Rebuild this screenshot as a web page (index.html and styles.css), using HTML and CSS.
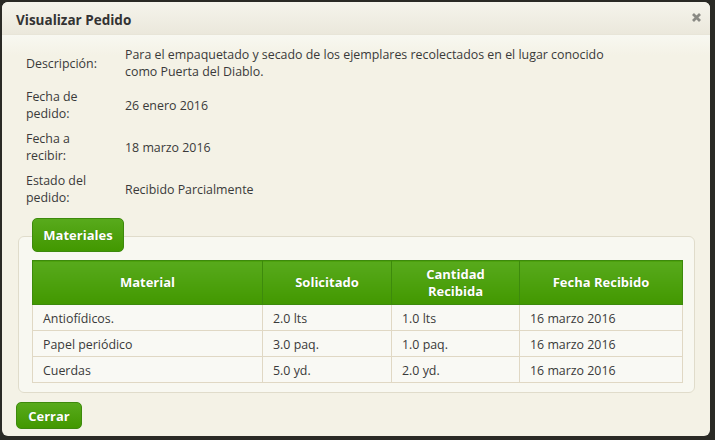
FILE: index.html
```html
<!DOCTYPE html>
<html lang="es">
<head>
<meta charset="utf-8">
<title>Visualizar Pedido</title>
<link rel="stylesheet" href="styles.css">
</head>
<body>
<div class="dialog">
  <div class="dialog-header">
    <span class="dialog-title">Visualizar Pedido</span>
    <svg class="close" width="11" height="11" viewBox="0 0 11 11" aria-label="Cerrar"><path d="M2 2 L9 9 M9 2 L2 9" stroke="#8a8a84" stroke-width="2.8" stroke-linecap="butt"/></svg>
  </div>
  <div class="dialog-body">
    <div class="info">
      <div class="info-row">
        <div class="info-label">Descripción:</div>
        <div class="info-value">Para el empaquetado y secado de los ejemplares recolectados en el lugar conocido como Puerta del Diablo.</div>
      </div>
      <div class="info-row">
        <div class="info-label">Fecha de pedido:</div>
        <div class="info-value">26 enero 2016</div>
      </div>
      <div class="info-row">
        <div class="info-label">Fecha a recibir:</div>
        <div class="info-value">18 marzo 2016</div>
      </div>
      <div class="info-row">
        <div class="info-label">Estado del pedido:</div>
        <div class="info-value">Recibido Parcialmente</div>
      </div>
    </div>
    <div class="group">
      <div class="group-legend">Materiales</div>
      <div class="group-box">
        <table class="materials">
          <thead>
            <tr>
              <th class="c1">Material</th>
              <th class="c2">Solicitado</th>
              <th class="c3">Cantidad<br>Recibida</th>
              <th class="c4">Fecha Recibido</th>
            </tr>
          </thead>
          <tbody>
            <tr><td>Antiofídicos.</td><td>2.0 lts</td><td>1.0 lts</td><td>16 marzo 2016</td></tr>
            <tr><td>Papel periódico</td><td>3.0 paq.</td><td>1.0 paq.</td><td>16 marzo 2016</td></tr>
            <tr><td>Cuerdas</td><td>5.0 yd.</td><td>2.0 yd.</td><td>16 marzo 2016</td></tr>
          </tbody>
        </table>
      </div>
    </div>
    <div class="actions">
      <button class="btn">Cerrar</button>
    </div>
  </div>
</div>
</body>
</html>
```

FILE: styles.css
```css
* { box-sizing: border-box; }
html, body { margin: 0; padding: 0; }
body {
  background: #2a2a25;
  font-family: "Open Sans", "Noto Sans", sans-serif;
  font-size: 12.4px;
  color: #3a3a3a;
  width: 715px;
  height: 440px;
  overflow: hidden;
}
.dialog {
  margin: 2px 0 0 2px;
  width: 708px;
  height: 434px;
  border-radius: 6px;
  background: #f4f2e6;
  overflow: hidden;
}
.dialog-header {
  height: 33px;
  display: flex;
  align-items: center;
  justify-content: space-between;
  padding: 4px 8px 0 14px;
  background: linear-gradient(#f5f4ec, #ebe8dc);
  border-bottom: 1px solid #e8e5d8;
}
.dialog-title {
  font-weight: bold;
  font-size: 13.5px;
  color: #333;
}
.close { display: block; margin-top: -5px; }
.dialog-body {
  background: linear-gradient(#f8f8f1 0, #f4f2e6 20px);
  padding-top: 11px;
}
.info {
  display: flex;
  flex-direction: column;
  gap: 8px;
  padding-left: 24px;
}
.info-row {
  display: flex;
  align-items: center;
  height: 34px;
  line-height: 17px;
}
.info-label {
  width: 99px;
  padding-right: 20px;
}
.info-value {
  width: 495px;
}
.group {
  margin: 12px 0 0 16px;
  width: 677px;
}
.group-legend {
  position: relative;
  z-index: 1;
  margin-left: 14px;
  width: 92px;
  height: 34px;
  display: flex;
  align-items: center;
  justify-content: center;
  color: #fff;
  font-weight: bold;
  font-size: 13px;
  border: 1px solid #3d8a0c;
  border-radius: 5px;
  background: linear-gradient(#58aa1c, #429800);
  text-shadow: 0 0 1px rgba(0,0,0,0.25);
}
.group-box {
  margin-top: -16px;
  border: 1px solid #e0dccb;
  border-radius: 6px;
  background: #f8f8f1;
  padding: 23px 12px 9px 13px;
}
.materials {
  width: 650px;
  border-collapse: collapse;
  table-layout: fixed;
}
.materials th {
  height: 44px;
  background: linear-gradient(#58aa1c, #429800);
  color: #fff;
  font-weight: bold;
  font-size: 13px;
  line-height: 17px;
  border: 1px solid #3d8a0c;
  text-shadow: 0 0 1px rgba(0,0,0,0.25);
  text-align: center;
}
.c1 { width: 230px; }
.c2 { width: 129px; }
.c3 { width: 128px; }
.c4 { width: 163px; }
.materials td {
  height: 26px;
  padding: 1px 10px 0;
  border: 1px solid #e0d8c4;
  background: #f9f9f4;
  line-height: 17px;
}
.actions {
  padding: 9px 0 0 14px;
}
.btn {
  width: 66px;
  height: 27px;
  font-family: inherit;
  font-weight: bold;
  font-size: 13px;
  color: #fff;
  border: 1px solid #3d8a0c;
  border-radius: 5px;
  background: linear-gradient(#58aa1c, #429800);
  text-shadow: 0 0 1px rgba(0,0,0,0.25);
  padding: 0;
}
```
